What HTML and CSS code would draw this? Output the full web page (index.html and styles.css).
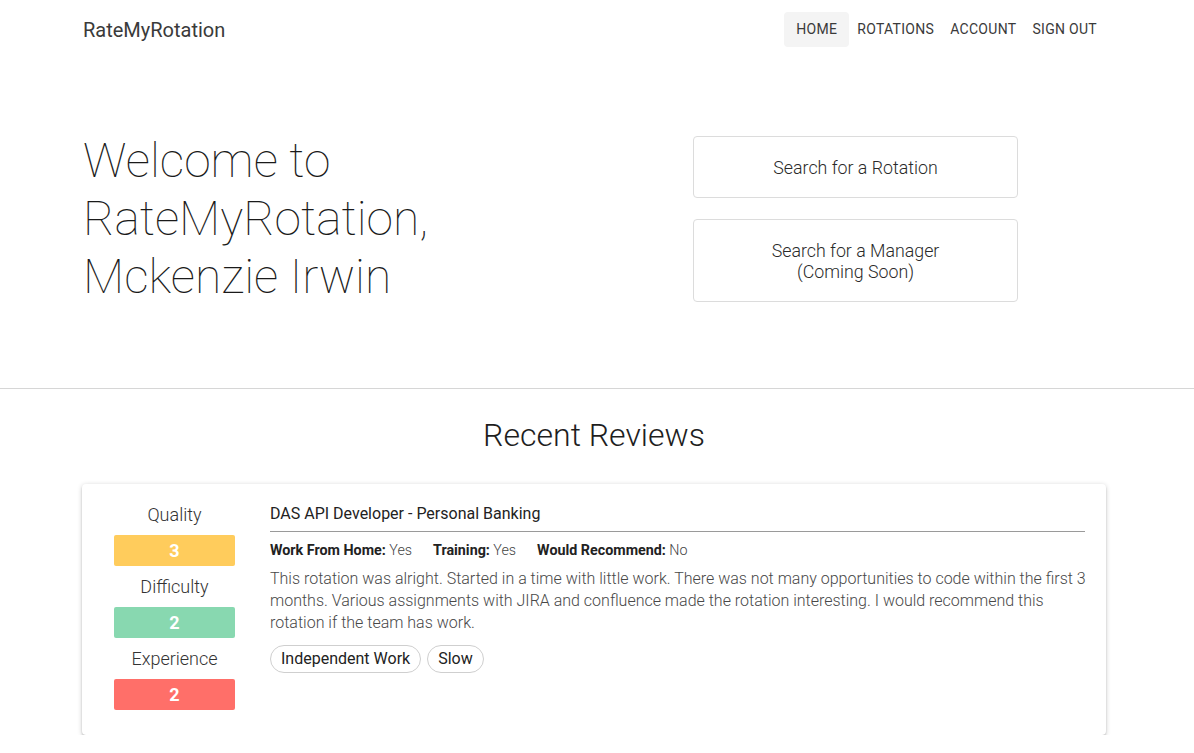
FILE: index.html
```html
<!DOCTYPE html>
<html lang="en">
<head>
<meta charset="utf-8">
<title>RateMyRotation</title>
<link rel="stylesheet" href="styles.css">
</head>
<body>
<header class="topbar">
  <div class="container topbar-inner">
    <a class="brand" href="#">RateMyRotation</a>
    <nav class="nav">
      <a class="nav-link active" href="#">Home</a>
      <a class="nav-link" href="#">Rotations</a>
      <a class="nav-link" href="#">Account</a>
      <a class="nav-link" href="#">Sign Out</a>
    </nav>
  </div>
</header>

<section class="hero">
  <div class="container hero-grid">
    <h1 class="welcome">Welcome to<br>RateMyRotation,<br>Mckenzie Irwin</h1>
    <div class="actions">
      <a class="action-btn" href="#">Search for a Rotation</a>
      <a class="action-btn" href="#">Search for a Manager<br>(Coming Soon)</a>
    </div>
  </div>
</section>

<section class="reviews">
  <h2 class="reviews-title">Recent Reviews</h2>
  <div class="container">
    <article class="card">
      <div class="scores">
        <div class="score-label">Quality</div>
        <div class="score-bar yellow">3</div>
        <div class="score-label">Difficulty</div>
        <div class="score-bar green">2</div>
        <div class="score-label">Experience</div>
        <div class="score-bar red">2</div>
      </div>
      <div class="review-body">
        <div class="review-title">DAS API Developer - Personal Banking</div>
        <div class="meta">
          <span class="meta-item"><b>Work From Home:</b> Yes</span>
          <span class="meta-item"><b>Training:</b> Yes</span>
          <span class="meta-item"><b>Would Recommend:</b> No</span>
        </div>
        <p class="review-text">This rotation was alright. Started in a time with little work. There was not many opportunities to code within the first 3 months. Various assignments with JIRA and confluence made the rotation interesting. I would recommend this rotation if the team has work.</p>
        <div class="chips">
          <span class="chip">Independent Work</span>
          <span class="chip">Slow</span>
        </div>
      </div>
    </article>
  </div>
</section>
</body>
</html>
```

FILE: styles.css
```css
* { box-sizing: border-box; }

html, body {
  margin: 0;
  padding: 0;
  background: #fff;
  font-family: Roboto, "Liberation Sans", Arial, sans-serif;
  color: #222;
}

a { text-decoration: none; color: inherit; }

.container {
  width: 1024px;
  margin: 0 0 0 82px;
}

/* Top bar */
.topbar-inner {
  height: 60px;
  display: flex;
  align-items: center;
  justify-content: space-between;
}

.brand {
  font-size: 20px;
  font-weight: 400;
  color: #3a3a3a;
  padding-left: 1px;
}

.nav {
  display: flex;
  align-items: center;
  margin-top: -1px;
  margin-right: 1px;
}

.nav-link {
  display: block;
  height: 35px;
  line-height: 35px;
  padding: 0 8px;
  font-size: 14px;
  letter-spacing: 0.3px;
  text-transform: uppercase;
  color: #3a3a3a;
  border-radius: 4px;
}

.nav-link.active {
  background: #f4f4f4;
  padding: 0 12px;
}

/* Hero */
.hero {
  padding: 72px 0 82px;
  border-bottom: 1px solid #d6d6d6;
}

.hero-grid {
  display: grid;
  grid-template-columns: 611px 325px;
  align-items: center;
}

.welcome {
  margin: 0;
  padding-left: 1px;
  font-family: "Roboto Thin", Roboto, "Liberation Sans", sans-serif;
  font-size: 48px;
  line-height: 58px;
  font-weight: 100;
  color: #1a1a1a;
}

.actions {
  display: flex;
  flex-direction: column;
  gap: 21px;
}

.action-btn {
  display: block;
  border: 1px solid #dcdcdc;
  border-radius: 4px;
  padding: 19.5px 0;
  text-align: center;
  font-size: 17.8px;
  line-height: 21px;
  font-weight: 300;
  color: #2a2a2a;
}

/* Reviews */
.reviews-title {
  margin: 26px 6px 29px 0;
  text-align: center;
  font-size: 32px;
  line-height: 40px;
  font-weight: 300;
  color: #1e1e1e;
}

.card {
  display: flex;
  gap: 35px;
  padding: 10px 21px 25px 32px;
  border-radius: 4px;
  background: #fff;
  box-shadow: 0 2px 2px 0 rgba(0,0,0,.14), 0 3px 1px -2px rgba(0,0,0,.12), 0 1px 5px 0 rgba(0,0,0,.2);
}

.scores {
  width: 121px;
  flex: none;
  display: flex;
  flex-direction: column;
}

.score-label {
  height: 41px;
  line-height: 41px;
  text-align: center;
  font-size: 18px;
  font-weight: 300;
  color: #333;
}

.score-bar {
  height: 31px;
  line-height: 31px;
  border-radius: 2px;
  text-align: center;
  color: #fff;
  font-weight: 700;
  font-size: 18px;
}

.yellow { background: #ffcc5c; }
.green { background: #88d8b0; }
.red { background: #ff6f69; }

.review-body {
  flex: 1;
  padding-top: 8px;
}

.review-title {
  font-size: 16px;
  line-height: 24px;
  padding-bottom: 5px;
  border-bottom: 1px solid #9a9a9a;
  color: #222;
}

.meta {
  margin-top: 8px;
  display: flex;
  gap: 21px;
  font-size: 14.3px;
  line-height: 20px;
  font-weight: 300;
  color: #444;
}

.meta b {
  font-weight: 700;
  color: #222;
}

.review-text {
  margin: 8px -5px 0 0;
  font-size: 16px;
  line-height: 22px;
  font-weight: 300;
  color: #484848;
}

.chips {
  margin-top: 11px;
  display: flex;
  gap: 6px;
}

.chip {
  display: inline-block;
  height: 28px;
  line-height: 26px;
  padding: 0 10px;
  border: 1px solid #cfcfcf;
  border-radius: 14px;
  font-size: 16px;
  color: #222;
}
```
